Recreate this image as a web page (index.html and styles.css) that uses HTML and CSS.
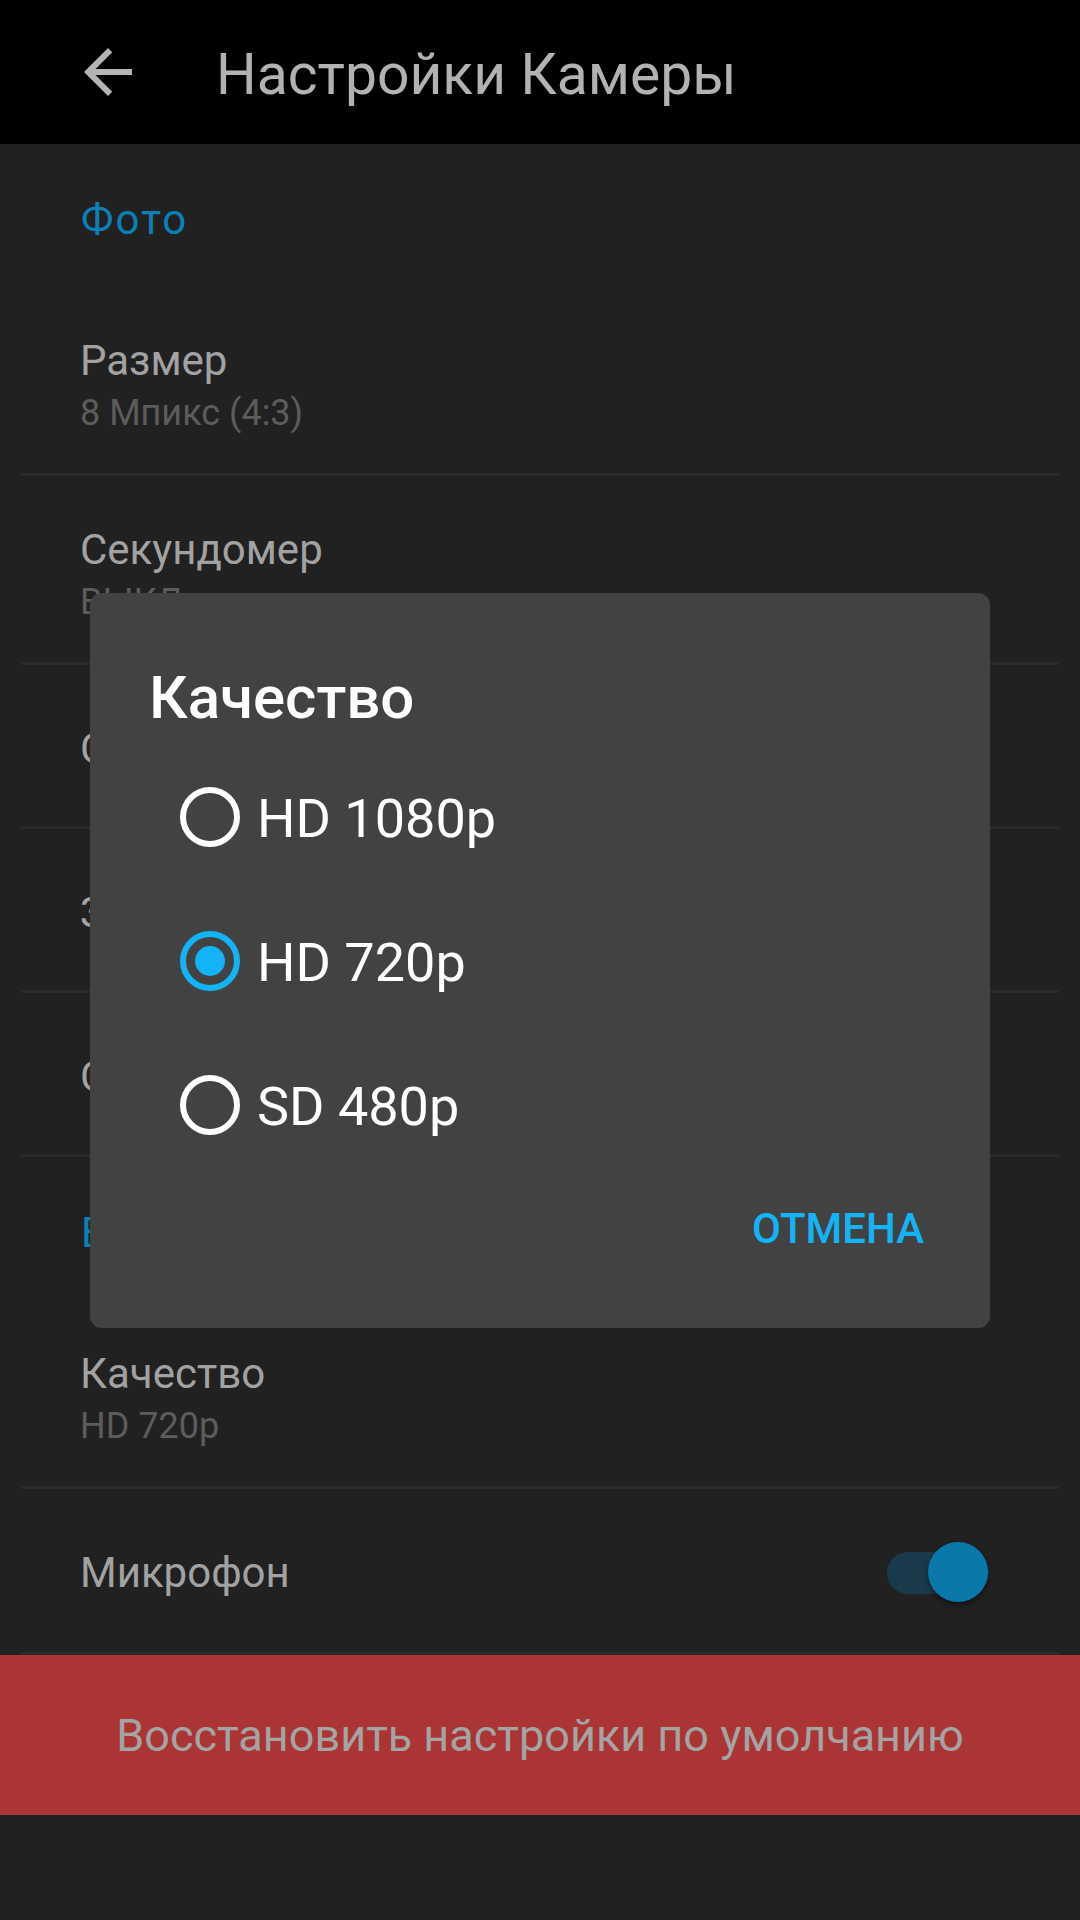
FILE: index.html
```html
<!DOCTYPE html>
<html lang="ru">
<head>
<meta charset="utf-8">
<title>Настройки Камеры</title>
<link rel="stylesheet" href="styles.css">
</head>
<body>
<header class="topbar">
  <svg class="back" viewBox="0 0 24 24" aria-label="Назад"><path d="M20 11H7.83l5.59-5.59L12 4l-8 8 8 8 1.41-1.41L7.83 13H20v-2z"/></svg>
  <h1 class="topbar-title">Настройки Камеры</h1>
</header>

<main class="settings">
  <section>
    <h2 class="category">Фото</h2>
    <div class="pref pref--two">
      <div class="pref-title">Размер</div>
      <div class="pref-summary">8 Мпикс (4:3)</div>
    </div>
    <div class="divider"></div>
    <div class="pref pref--two">
      <div class="pref-title">Секундомер</div>
      <div class="pref-summary">ВЫКЛ</div>
    </div>
    <div class="divider"></div>
    <div class="pref pref--one"><div class="pref-title">Сетка</div></div>
    <div class="divider"></div>
    <div class="pref pref--one"><div class="pref-title">Звук затвора</div></div>
    <div class="divider"></div>
    <div class="pref pref--one"><div class="pref-title">Сохранять местоположение</div></div>
    <div class="divider"></div>
  </section>
  <section>
    <h2 class="category">Видео</h2>
    <div class="pref pref--two">
      <div class="pref-title">Качество</div>
      <div class="pref-summary">HD 720p</div>
    </div>
    <div class="divider"></div>
    <div class="pref pref--one pref--last">
      <div class="pref-title">Микрофон</div>
      <div class="switch switch--on" role="switch" aria-checked="true"><span class="switch-thumb"></span></div>
    </div>
    <div class="divider"></div>
  </section>
  <button class="reset">Восстановить настройки по умолчанию</button>
</main>

<div class="overlay">
  <div class="dialog" role="dialog">
    <h2 class="dialog-title">Качество</h2>
    <ul class="options" role="radiogroup">
      <li class="option"><span class="radio"></span><span class="option-label">HD 1080p</span></li>
      <li class="option"><span class="radio radio--on"></span><span class="option-label">HD 720p</span></li>
      <li class="option"><span class="radio"></span><span class="option-label">SD 480p</span></li>
    </ul>
    <div class="dialog-actions">
      <button class="text-btn">ОТМЕНА</button>
    </div>
  </div>
</div>
</body>
</html>
```

FILE: styles.css
```css
* {
  box-sizing: border-box;
  margin: 0;
  padding: 0;
}

html, body {
  width: 1080px;
  height: 1920px;
}

body {
  background: #212121;
  font-family: Roboto, "Noto Sans", "Liberation Sans", sans-serif;
  overflow: hidden;
}

/* Top bar */
.topbar {
  height: 144px;
  background: #000;
  display: flex;
  align-items: center;
}

.back {
  width: 72px;
  height: 72px;
  margin-left: 72px;
  margin-right: 72px;
  fill: #b5b5b5;
  flex-shrink: 0;
}

.topbar-title {
  font-size: 57px;
  font-weight: 400;
  line-height: 70px;
  padding-top: 6px;
  color: #b2b2b2;
}

/* Preferences list */
.category {
  padding: 51px 0 42px 81px;
  font-size: 42px;
  letter-spacing: 2px;
  line-height: 50px;
  font-weight: 400;
  color: #0b80b6;
}

.pref {
  padding-left: 80px;
  padding-right: 91px;
}

.pref--two {
  padding-top: 49px;
  padding-bottom: 35px;
}

.pref--one {
  padding-top: 59px;
  padding-bottom: 52px;
  display: flex;
  align-items: center;
  justify-content: space-between;
}

.pref--last {
  padding-bottom: 54px;
}

.pref-title {
  font-size: 42px;
  line-height: 50px;
  color: #a2a2a2;
  white-space: nowrap;
}

.pref-summary {
  margin-top: 2px;
  font-size: 36px;
  line-height: 50px;
  color: #5c5c5c;
}

.divider {
  height: 3px;
  margin: 0 21px;
  background: #2b2b2b;
}

/* Switch */
.switch {
  position: relative;
  width: 102px;
  height: 42px;
  border-radius: 21px;
  background: #193a4b;
  flex-shrink: 0;
}

.switch-thumb {
  position: absolute;
  right: 1px;
  top: -10px;
  width: 60px;
  height: 60px;
  border-radius: 50%;
  background: #0b78aa;
  box-shadow: 0 3px 5px rgba(0, 0, 0, 0.45);
}

/* Reset button */
.reset {
  display: flex;
  align-items: center;
  justify-content: center;
  width: 100%;
  height: 160px;
  border: 0;
  background: #ab3535;
  color: #a4a4a4;
  font-family: inherit;
  font-size: 45px;
  font-weight: 400;
}

/* Dialog */
.overlay {
  position: fixed;
  inset: 0;
  display: flex;
  align-items: center;
  justify-content: center;
}

.dialog {
  width: 900px;
  background: #424242;
  border-radius: 12px;
}

.dialog-title {
  padding: 70px 0 0 59px;
  font-size: 60px;
  line-height: 70px;
  font-weight: 500;
  color: #fff;
}

.options {
  list-style: none;
  margin-top: 12px;
}

.option {
  height: 144px;
  display: flex;
  align-items: center;
  gap: 17px;
  padding-left: 90px;
  font-size: 54px;
  color: #fff;
}

.option-label {
  line-height: 60px;
  padding-top: 5px;
}

.radio {
  width: 60px;
  height: 60px;
  border: 6px solid #fff;
  border-radius: 50%;
  display: flex;
  align-items: center;
  justify-content: center;
  flex-shrink: 0;
}

.radio--on {
  border-color: #12b4f6;
}

.radio--on::after {
  content: "";
  width: 30px;
  height: 30px;
  border-radius: 50%;
  background: #12b4f6;
}

.dialog-actions {
  display: flex;
  justify-content: flex-end;
  padding: 28px 66px 75px 0;
}

.text-btn {
  border: 0;
  background: none;
  font-family: inherit;
  font-size: 42px;
  line-height: 48px;
  font-weight: 500;
  color: #12b4f6;
}
```
